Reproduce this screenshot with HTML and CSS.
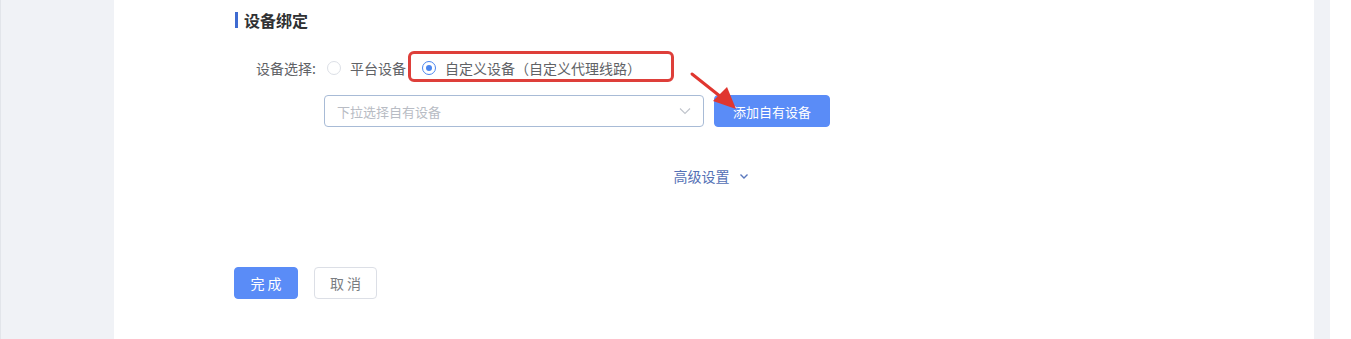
FILE: index.html
```html
<!DOCTYPE html>
<html lang="zh-CN">
<head>
<meta charset="utf-8">
<title>设备绑定</title>
<link rel="stylesheet" href="styles.css">
</head>
<body>
<div class="page">
  <aside class="side-left"></aside>
  <main class="main">
    <h3 class="section-title">设备绑定</h3>
    <div class="form-row row-radio">
      <label class="form-label">设备选择:</label>
      <div class="radio-group">
        <span class="radio"><span class="radio-circle"></span><span class="radio-text">平台设备</span></span>
        <span class="radio checked"><span class="radio-circle"></span><span class="radio-text">自定义设备（自定义代理线路）</span></span>
      </div>
    </div>
    <div class="form-row row-select">
      <span class="form-label"></span>
      <div class="select">
        <span class="select-placeholder">下拉选择自有设备</span>
        <svg class="select-arrow" width="12" height="8" viewBox="0 0 12 8"><path d="M1 1.5 L6 6.5 L11 1.5" fill="none" stroke="#c0c4cc" stroke-width="1.1"/></svg>
      </div>
      <button class="btn btn-primary btn-add">添加自有设备</button>
    </div>
    <div class="advanced">
      <span>高级设置</span>
      <svg class="adv-arrow" width="10" height="7" viewBox="0 0 10 7"><path d="M1.5 1.5 L5 5 L8.5 1.5" fill="none" stroke="#5a78bd" stroke-width="1.4"/></svg>
    </div>
    <div class="actions">
      <button class="btn btn-primary btn-small">完成</button>
      <button class="btn btn-default btn-small">取消</button>
    </div>
  </main>
  <div class="gutter"></div>
  <aside class="side-right"></aside>

  <div class="annot-box"></div>
  <svg class="annot-arrow" width="1351" height="339" viewBox="0 0 1351 339">
    <line x1="692" y1="74" x2="721" y2="97" stroke="#e0362f" stroke-width="3" stroke-linecap="round"/>
    <polygon points="736,109 713,101 727,87" fill="#e0362f"/>
  </svg>
</div>
</body>
</html>
```

FILE: styles.css
```css
* { box-sizing: border-box; }
html, body {
  margin: 0;
  padding: 0;
  background: #ffffff;
}
body {
  font-family: "Noto Sans CJK SC", "Noto Sans", "Liberation Sans", sans-serif;
  color: #606266;
}
.page {
  position: relative;
  display: flex;
  width: 1351px;
  height: 339px;
  overflow: hidden;
}
.side-left {
  width: 114px;
  flex: none;
  background: #f0f2f6;
  border-left: 1px solid #e2e5ea;
}
.main {
  width: 1200px;
  flex: none;
  background: #ffffff;
  display: flex;
  flex-direction: column;
}
.gutter {
  width: 16px;
  flex: none;
  background: #f0f2f6;
}
.side-right {
  flex: 1;
  background: #ffffff;
}
.section-title {
  margin: 12px 0 0 121px;
  height: 16px;
  line-height: 16px;
  border-left: 3px solid #3e6bd1;
  padding-left: 6px;
  font-size: 16px;
  font-weight: 700;
  color: #303133;
}
.form-row {
  display: flex;
  align-items: center;
  margin-left: 120px;
}
.row-radio {
  margin-top: 24px;
  height: 32px;
}
.row-select {
  margin-top: 11px;
  height: 32px;
}
.form-label {
  width: 82px;
  margin-right: 8px;
  text-align: right;
  font-size: 14px;
  line-height: 20px;
  color: #606266;
}
.radio-group {
  display: flex;
  align-items: center;
}
.radio {
  display: inline-flex;
  align-items: center;
  font-size: 14px;
  line-height: 20px;
  color: #606266;
}
.radio + .radio {
  margin-left: 16px;
}
.radio-circle {
  width: 14px;
  height: 14px;
  margin-left: 3px;
  border: 1px solid #dcdfe6;
  border-radius: 50%;
  background: #fff;
  position: relative;
}
.radio + .radio .radio-circle { margin-left: 0; }
.radio-text { margin-left: 9px; }
.radio.checked .radio-circle {
  border-color: #4a85ee;
}
.radio.checked .radio-circle::after {
  content: "";
  position: absolute;
  left: 3px;
  top: 3px;
  width: 6px;
  height: 6px;
  border-radius: 50%;
  background: #4a85ee;
}
.select {
  width: 380px;
  height: 32px;
  border: 1px solid #a8bbd6;
  border-radius: 4px;
  display: flex;
  align-items: center;
  justify-content: space-between;
  padding: 0 12px 0 12px;
}
.select-placeholder {
  font-size: 13px;
  color: #b8bcc4;
}
.select-arrow { display: block; }
.btn {
  font-family: inherit;
  height: 32px;
  border-radius: 4px;
  font-size: 13px;
  padding: 0;
  cursor: pointer;
}
.btn-primary {
  background: #5a8cf7;
  border: 1px solid #5a8cf7;
  color: #ffffff;
}
.btn-default {
  background: #ffffff;
  border: 1px solid #dcdfe6;
  color: #7a7d82;
}
.btn-add {
  width: 116px;
  margin-left: 10px;
}
.advanced {
  margin-top: 39px;
  height: 20px;
  display: flex;
  align-items: center;
  justify-content: center;
  padding-right: 6px;
  font-size: 14px;
  line-height: 20px;
  color: #5470b5;
}
.adv-arrow { margin-left: 9px; display: block; }
.actions {
  margin: 81px 0 0 120px;
  display: flex;
  gap: 16px;
}
.btn-small {
  width: 64px;
  font-size: 14px;
  letter-spacing: 3px;
  text-indent: 3px;
}
.btn-default.btn-small { width: 63px; }
.annot-box {
  position: absolute;
  left: 408px;
  top: 51px;
  width: 266px;
  height: 31px;
  border: 3px solid #de3f3a;
  border-radius: 6px;
  pointer-events: none;
}
.annot-arrow {
  position: absolute;
  left: 0;
  top: 0;
  pointer-events: none;
}
```
